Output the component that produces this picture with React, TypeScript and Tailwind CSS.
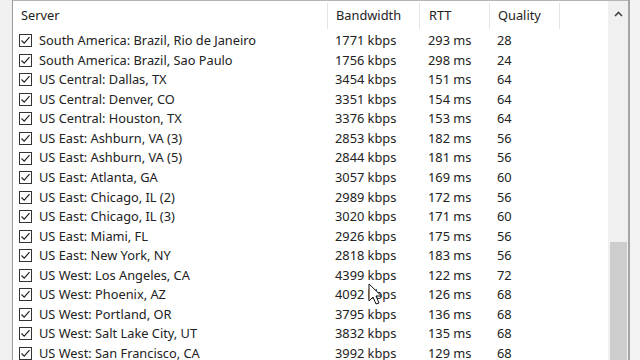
import React from "react";

type Row = [string, number, number, number];

const rows: Row[] = [
  ["South America: Brazil, Rio de Janeiro", 1771, 293, 28],
  ["South America: Brazil, Sao Paulo", 1756, 298, 24],
  ["US Central: Dallas, TX", 3454, 151, 64],
  ["US Central: Denver, CO", 3351, 154, 64],
  ["US Central: Houston, TX", 3376, 153, 64],
  ["US East: Ashburn, VA (3)", 2853, 182, 56],
  ["US East: Ashburn, VA (5)", 2844, 181, 56],
  ["US East: Atlanta, GA", 3057, 169, 60],
  ["US East: Chicago, IL (2)", 2989, 172, 56],
  ["US East: Chicago, IL (3)", 3020, 171, 60],
  ["US East: Miami, FL", 2926, 175, 56],
  ["US East: New York, NY", 2818, 183, 56],
  ["US West: Los Angeles, CA", 4399, 122, 72],
  ["US West: Phoenix, AZ", 4092, 126, 68],
  ["US West: Portland, OR", 3795, 136, 68],
  ["US West: Salt Lake City, UT", 3832, 135, 68],
  ["US West: San Francisco, CA", 3992, 129, 68],
];

function Check() {
  return (
    <span className="flex h-[13px] w-[13px] shrink-0 items-center justify-center border border-[#333] bg-white">
      <svg width="11" height="11" viewBox="0 0 11 11" fill="none">
        <path d="M1.5 5.5 L4.2 8.2 L9.5 2.2" stroke="#222" strokeWidth="1.2" />
      </svg>
    </span>
  );
}

function Cursor() {
  return (
    <svg className="absolute left-[368px] top-[283px]" width="16" height="24" viewBox="0 0 16 24">
      <path d="M1 1 L1 18 L5 14 L8 21 L11 20 L8 13 L13.5 13 Z" fill="#fff" stroke="#111" strokeWidth="1" strokeLinejoin="round" />
    </svg>
  );
}

export default function App() {
  return (
    <div
      className="relative flex h-[360px] w-[640px] overflow-hidden bg-[#f0f0f0] text-[12.8px] text-[#222]"
      style={{ fontFamily: '"Noto Sans", "Open Sans", sans-serif' }}
    >
      <div className="w-[13px] shrink-0 border-r border-[#9a9a9a]" />
      <div className="flex flex-1 border-t border-[#b5b5b5] bg-white">
        <div className="flex-1">
          <div className="grid h-[30px] grid-cols-[314px_92px_70px_70px_1fr] items-center">
            <div className="pl-2">Server</div>
            <div className="flex h-[26px] items-center border-l border-[#e5e5e5] pl-2">Bandwidth</div>
            <div className="flex h-[26px] items-center border-l border-[#e5e5e5] pl-[9px]">RTT</div>
            <div className="flex h-[26px] items-center border-l border-[#e5e5e5] pl-2">Quality</div>
            <div className="h-[26px] border-l border-[#e5e5e5]" />
          </div>
          {rows.map(([name, bw, rtt, q]) => (
            <div key={name} className="grid h-[19.56px] grid-cols-[314px_92px_70px_70px_1fr] items-center">
              <div className="flex items-center gap-[7px] pl-[6px]">
                <Check />
                <span className="whitespace-nowrap">{name}</span>
              </div>
              <div className="pl-2">{bw} kbps</div>
              <div className="pl-[9px]">{rtt} ms</div>
              <div className="pl-2">{q}</div>
              <div />
            </div>
          ))}
        </div>
        <div className="flex w-[20px] shrink-0 flex-col bg-[#f0f0f0]">
          <div className="flex h-[26px] items-center justify-center">
            <svg width="9" height="6" viewBox="0 0 9 6">
              <path d="M1 5 L4.5 1.5 L8 5" stroke="#444" strokeWidth="1.6" fill="none" />
            </svg>
          </div>
          <div className="flex-1 pt-[215px]">
            <div className="mx-auto h-full w-[17px] bg-[#cdcdcd]" />
          </div>
        </div>
      </div>
      <div className="w-[12px] shrink-0 border-l-2 border-[#a5a5a5] bg-[#f3f3f3]" />
      <Cursor />
    </div>
  );
}
